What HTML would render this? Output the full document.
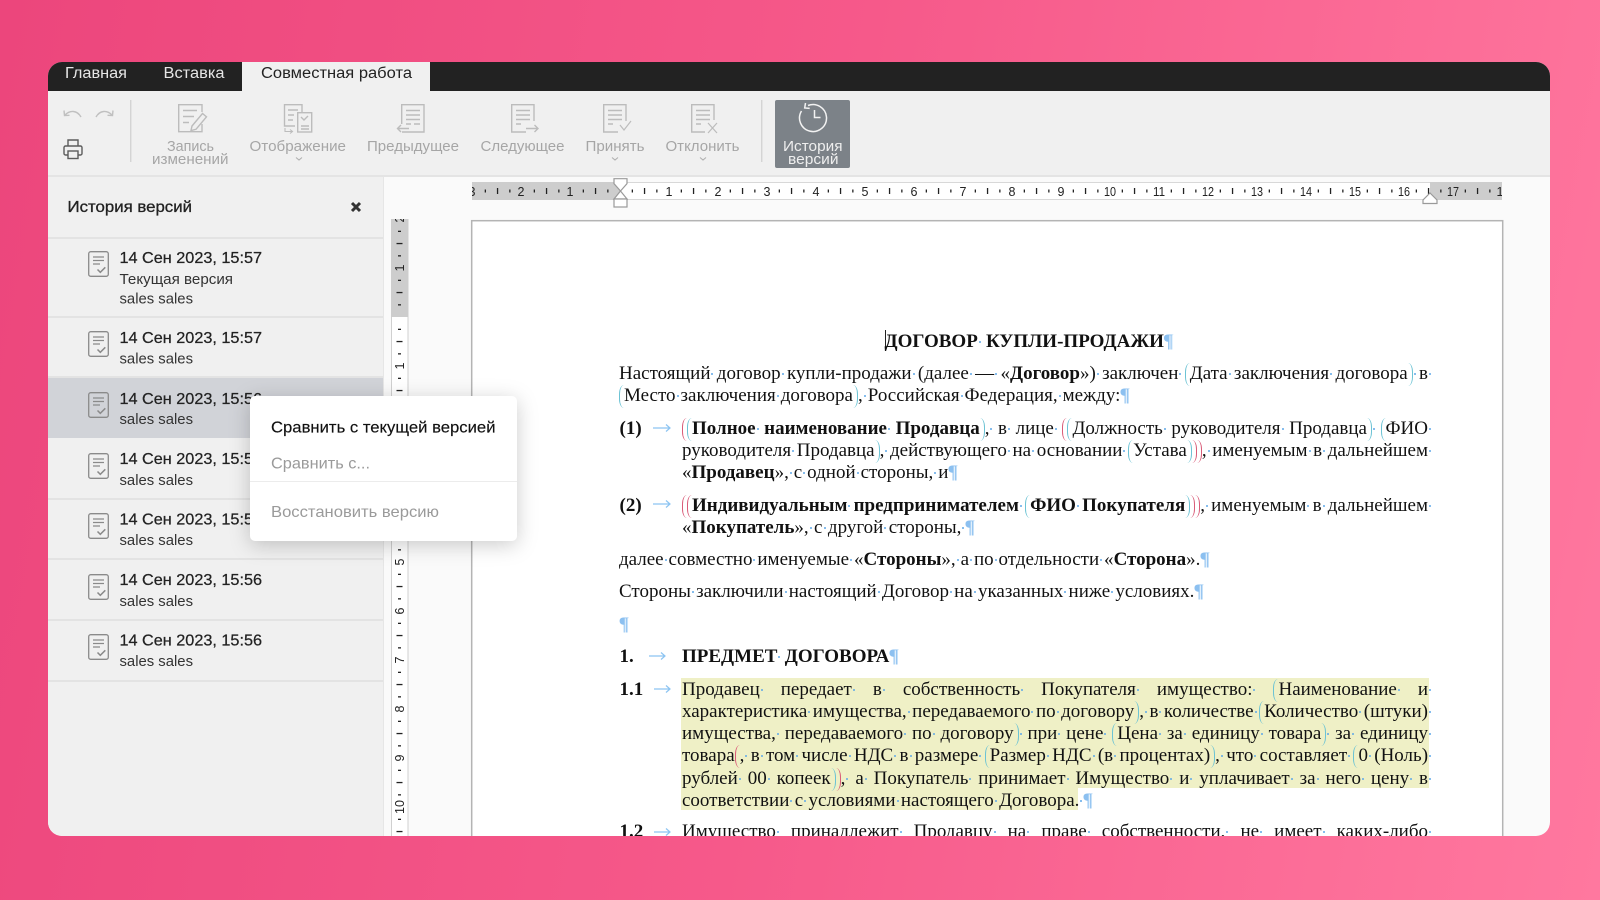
<!DOCTYPE html>
<html lang="ru"><head><meta charset="utf-8"><title>История версий</title>
<style>
html,body{margin:0;padding:0;width:1600px;height:900px;overflow:hidden;background:linear-gradient(100deg,#ec467c 0%,#f6598a 50%,#ff789f 100%)}
#w{position:absolute;left:0;top:0;width:1600px;height:900px;clip-path:inset(62px 50px 64px 48px round 14px)}
#w>svg{position:absolute;left:0;top:0}
svg text{font-family:"Liberation Sans",sans-serif}
.d{position:absolute;left:682px;width:750px;margin-top:1px;font:19px/22px "Liberation Serif",serif;color:#111;white-space:nowrap;text-align:justify;text-align-last:justify;word-spacing:-4.75px}
.m{position:absolute;left:619.5px;margin-top:1px;font:bold 19px/22px "Liberation Serif",serif;color:#111;white-space:nowrap}
u{display:inline-block;width:2px;height:2px;margin:0 1px;background:#5fa8e8;border-radius:1px;vertical-align:4px;text-decoration:none}
s{display:inline-block;width:5px;height:23px;vertical-align:-7px;text-decoration:none;box-sizing:border-box}
s.l,s.L{border-left:1.6px solid #6cc3d4;border-radius:5px 0 0 5px/9px 0 0 9px}
s.r,s.R{border-right:1.6px solid #6cc3d4;border-radius:0 5px 5px 0/0 9px 9px 0}
s.L,s.R{border-color:#d95c78}
i{font-style:normal;font-weight:normal;color:#8cc0f0;text-shadow:1px 0 #c2dff8}
</style></head><body>
<div id="w">
<svg width="1600" height="900" viewBox="0 0 1600 900" xmlns="http://www.w3.org/2000/svg">
<defs>
<symbol id="v" viewBox="0 0 21 26"><rect x=".7" y=".7" width="19.6" height="24.6" rx="2" fill="none" stroke="#8a8a8a" stroke-width="1.3"/><path d="M5 6h11M5 9.500h11M5 13h7" stroke="#8a8a8a" stroke-width="1.2" fill="none"/><path d="M9.500 18.500l2.800 2.800 5-5" stroke="#8a8a8a" stroke-width="1.5" fill="none"/></symbol>
<pattern id="hp" x="620" y="0" width="49" height="900" patternUnits="userSpaceOnUse"><rect x="11.700" y="189.500" width="1.300" height="3" fill="#222"/><rect x="23.900" y="188" width="1.300" height="6" fill="#222"/><rect x="36.200" y="189.500" width="1.300" height="3" fill="#222"/></pattern>
<pattern id="vp" x="0" y="317" width="900" height="49" patternUnits="userSpaceOnUse"><rect x="398" y="11.700" width="3" height="1.300" fill="#222"/><rect x="396.500" y="23.900" width="6" height="1.300" fill="#222"/><rect x="398" y="36.200" width="3" height="1.300" fill="#222"/></pattern>
<clipPath id="hc"><rect x="472" y="182" width="1030" height="18"/></clipPath>
<clipPath id="vc"><rect x="390" y="219" width="20" height="617"/></clipPath>
</defs>
<!-- window -->
<rect x="48" y="62" width="1502" height="774" fill="#fafafa"/>
<rect x="48" y="62" width="1502" height="29" fill="#222"/>
<rect x="242" y="62" width="188" height="29" fill="#f0f0f0"/>
<rect x="48" y="91" width="1502" height="85" fill="#f0f0f0"/>
<rect x="48" y="175" width="1502" height="2" fill="#e4e4e4"/>
<rect x="48" y="177" width="335" height="659" fill="#f0f0f0"/>
<rect x="383" y="177" width="1" height="659" fill="#e6e6e6"/>
<!-- tabs -->
<text x="65" y="78" font-size="15.5" fill="#e6e6e6" textLength="62" lengthAdjust="spacingAndGlyphs">Главная</text>
<text x="163.500" y="78" font-size="15.5" fill="#e6e6e6" textLength="61" lengthAdjust="spacingAndGlyphs">Вставка</text>
<text x="261" y="78" font-size="15.5" fill="#222" textLength="151" lengthAdjust="spacingAndGlyphs">Совместная работа</text>
<!-- toolbar left -->
<g fill="none" stroke="#c0c0c0" stroke-width="1.400">
<path d="M81 117C77 110 70 110 65 115M64 110.500l.5 5 5-.2"/>
<path d="M96 117C100 110 107 110 112 115M113 110.500l-.5 5-5-.2"/>
</g>
<g fill="none" stroke="#5c5c5c" stroke-width="1.400"><path d="M68 146v-6h10v6M68 155h-2.500a1.500 1.500 0 0 1-1.500-1.500v-6a1.500 1.500 0 0 1 1.500-1.500h15a1.500 1.500 0 0 1 1.500 1.500v6a1.500 1.500 0 0 1-1.500 1.500H78"/><rect x="68" y="151" width="10" height="7.500"/></g>
<rect x="130" y="100" width="1.400" height="62" fill="#d4d4d4"/>
<rect x="761" y="100" width="1.400" height="62" fill="#d4d4d4"/>
<!-- toolbar icons -->
<g fill="none" stroke="#bcbcbc" stroke-width="1.400">
<path d="M202 112V104.700H178.700V131.700H202V124M183 110.500h14M183 116.500h11M183 122.500h6"/>
<path d="M192 126l10.500-12.500 4 3.300L196 129.300l-5 1.200z"/>
<path d="M295 126h-10.500V104.700H302V112M288 110h10M288 115h6M288 120h5"/>
<rect x="297.700" y="112.700" width="14" height="19.300"/><path d="M301 126h8M301 129h8M301 117l3 3 4-4"/>
<path d="M285 128v3.500h7M290 129.500l2.500 2-2.500 2" stroke-width="1.100"/>
<path d="M401.700 124V104.700H424V132H402M406 110.500h14M406 115h14M406 119.500h14M406 124h5M414 124h6"/><path d="M409 128.500H397.500M401 125l-3.500 3.500 3.500 3.500"/>
<path d="M526 132H511.700V104.700H534V121M516 110.500h14M516 115h14M516 119.500h14M516 124h5"/><path d="M526 128.500H538M534.500 125l3.500 3.500-3.500 3.500"/>
<path d="M618 132H603.700V104.700H626V121M608 110.500h14M608 115h14M608 119.500h14M608 124h5"/><path d="M620 125l4 5 7-9" stroke-width="1.200"/>
<path d="M705 132H691.700V104.700H714V120M696 110.500h14M696 115h14M696 119.500h14M696 124h5"/><path d="M708 123l9 10M717 123l-9 10" stroke-width="1.200"/>
</g>
<g fill="none" stroke="#b0b0b0" stroke-width="1.100"><path d="M296 157.500l3 2.500 3-2.500M612 157.500l3 2.500 3-2.500M700 157.500l3 2.500 3-2.500"/></g>
<g font-size="15" fill="#a6a6a6">
<text x="167" y="151" textLength="47" lengthAdjust="spacingAndGlyphs">Запись</text>
<text x="152" y="164" textLength="76.500" lengthAdjust="spacingAndGlyphs">изменений</text>
<text x="249.500" y="151" textLength="96.500" lengthAdjust="spacingAndGlyphs">Отображение</text>
<text x="367" y="151" textLength="92" lengthAdjust="spacingAndGlyphs">Предыдущее</text>
<text x="480.500" y="151" textLength="84" lengthAdjust="spacingAndGlyphs">Следующее</text>
<text x="585.500" y="151" textLength="59" lengthAdjust="spacingAndGlyphs">Принять</text>
<text x="665.500" y="151" textLength="74" lengthAdjust="spacingAndGlyphs">Отклонить</text>
</g>
<rect x="775" y="100" width="75" height="68" rx="2" fill="#7c8288"/>
<g fill="none" stroke="#f2f2f2" stroke-width="1.500"><path d="M808 105.500A13.500 13.500 0 1 1 801.500 111M805.500 103l-.8 5 5 .4"/><path d="M814.500 110v7.500h6"/></g>
<g font-size="15" fill="#eeeeee">
<text x="783" y="151" textLength="59.500" lengthAdjust="spacingAndGlyphs">История</text>
<text x="788" y="164" textLength="50.500" lengthAdjust="spacingAndGlyphs">версий</text>
</g>
<!-- sidebar -->
<text x="67.500" y="212" font-size="16" fill="#222" stroke="#222" stroke-width=".3" textLength="124.500" lengthAdjust="spacingAndGlyphs">История версий</text>
<path d="M352 203l8 8M360 203l-8 8" stroke="#333" stroke-width="3" fill="none"/>
<rect x="48" y="378" width="335" height="60" fill="#d1d3d8"/>
<g fill="#e3e3e3">
<rect x="48" y="237" width="335" height="2"/><rect x="48" y="316" width="335" height="2"/><rect x="48" y="376" width="335" height="2"/><rect x="48" y="498" width="335" height="2"/><rect x="48" y="558" width="335" height="2"/><rect x="48" y="619" width="335" height="2"/><rect x="48" y="680" width="335" height="2"/>
</g>
<use href="#v" x="88" y="251" width="21" height="26"/>
<use href="#v" x="88" y="331" width="21" height="26"/>
<use href="#v" x="88" y="392" width="21" height="26"/>
<use href="#v" x="88" y="453" width="21" height="26"/>
<use href="#v" x="88" y="513" width="21" height="26"/>
<use href="#v" x="88" y="574" width="21" height="26"/>
<use href="#v" x="88" y="634" width="21" height="26"/>
<g font-size="16" fill="#222" stroke="#222" stroke-width=".25">
<text x="119.500" y="263" textLength="142.500" lengthAdjust="spacingAndGlyphs">14 Сен 2023, 15:57</text>
<text x="119.500" y="343" textLength="142.500" lengthAdjust="spacingAndGlyphs">14 Сен 2023, 15:57</text>
<text x="119.500" y="404" textLength="142.500" lengthAdjust="spacingAndGlyphs">14 Сен 2023, 15:56</text>
<text x="119.500" y="464" textLength="142.500" lengthAdjust="spacingAndGlyphs">14 Сен 2023, 15:56</text>
<text x="119.500" y="524.500" textLength="142.500" lengthAdjust="spacingAndGlyphs">14 Сен 2023, 15:56</text>
<text x="119.500" y="585" textLength="142.500" lengthAdjust="spacingAndGlyphs">14 Сен 2023, 15:56</text>
<text x="119.500" y="645.500" textLength="142.500" lengthAdjust="spacingAndGlyphs">14 Сен 2023, 15:56</text>
</g>
<g font-size="14.500" fill="#333">
<text x="119.500" y="284" textLength="113.500" lengthAdjust="spacingAndGlyphs">Текущая версия</text>
<text x="119.500" y="303.500" textLength="73.500" lengthAdjust="spacingAndGlyphs">sales sales</text>
<text x="119.500" y="363.500" textLength="73.500" lengthAdjust="spacingAndGlyphs">sales sales</text>
<text x="119.500" y="424" textLength="73.500" lengthAdjust="spacingAndGlyphs">sales sales</text>
<text x="119.500" y="485" textLength="73.500" lengthAdjust="spacingAndGlyphs">sales sales</text>
<text x="119.500" y="545" textLength="73.500" lengthAdjust="spacingAndGlyphs">sales sales</text>
<text x="119.500" y="606" textLength="73.500" lengthAdjust="spacingAndGlyphs">sales sales</text>
<text x="119.500" y="666" textLength="73.500" lengthAdjust="spacingAndGlyphs">sales sales</text>
</g>
<!-- horizontal ruler -->
<rect x="472" y="182" width="1030" height="18" fill="#fff"/>
<rect x="472" y="182" width="1030" height="1" fill="#d8d8d8"/><rect x="472" y="199" width="1030" height="1" fill="#d8d8d8"/>
<rect x="472" y="182" width="148" height="18" fill="#cdcdcd"/>
<rect x="1430" y="182" width="72" height="18" fill="#cdcdcd"/>
<rect x="472" y="182" width="1030" height="18" fill="url(#hp)"/>
<g font-size="12.500" fill="#222" text-anchor="middle" clip-path="url(#hc)">
<text x="472" y="196">3</text><text x="521" y="196">2</text><text x="570" y="196">1</text>
<text x="669" y="196">1</text><text x="718" y="196">2</text><text x="767" y="196">3</text><text x="816" y="196">4</text><text x="865" y="196">5</text><text x="914" y="196">6</text><text x="963" y="196">7</text><text x="1012" y="196">8</text><text x="1061" y="196">9</text><text x="1110" y="196" textLength="12" lengthAdjust="spacingAndGlyphs">10</text><text x="1159" y="196" textLength="12" lengthAdjust="spacingAndGlyphs">11</text><text x="1208" y="196" textLength="12" lengthAdjust="spacingAndGlyphs">12</text><text x="1257" y="196" textLength="12" lengthAdjust="spacingAndGlyphs">13</text><text x="1306" y="196" textLength="12" lengthAdjust="spacingAndGlyphs">14</text><text x="1355" y="196" textLength="12" lengthAdjust="spacingAndGlyphs">15</text><text x="1404" y="196" textLength="12" lengthAdjust="spacingAndGlyphs">16</text><text x="1453" y="196" textLength="12" lengthAdjust="spacingAndGlyphs">17</text><text x="1500" y="196">1</text>
</g>
<path d="M614 178.700h13v5l-6.500 7.300-6.500-7.300zM620.500 191l6.500 8h-13z" fill="#fff" stroke="#9a9a9a" stroke-width="1.200"/>
<rect x="614" y="199" width="13" height="8" fill="#fff" stroke="#9a9a9a" stroke-width="1.200"/>
<path d="M1430 193l7 7v3.500h-14v-3.500z" fill="#fff" stroke="#9a9a9a" stroke-width="1.200"/>
<!-- vertical ruler -->
<rect x="391" y="219" width="17.500" height="617" fill="#fff"/>
<rect x="391" y="219" width="1" height="617" fill="#d0d0d0"/><rect x="407.500" y="219" width="1" height="617" fill="#d0d0d0"/>
<rect x="391" y="219" width="17.500" height="98" fill="#cdcdcd"/>
<rect x="391" y="219" width="17.500" height="617" fill="url(#vp)"/>
<g font-size="12.500" fill="#222" text-anchor="middle" clip-path="url(#vc)">
<text transform="translate(404 219) rotate(-90)">2</text><text transform="translate(404 268) rotate(-90)">1</text>
<text transform="translate(404 366) rotate(-90)">1</text><text transform="translate(404 415) rotate(-90)">2</text><text transform="translate(404 464) rotate(-90)">3</text><text transform="translate(404 513) rotate(-90)">4</text><text transform="translate(404 562) rotate(-90)">5</text><text transform="translate(404 611) rotate(-90)">6</text><text transform="translate(404 660) rotate(-90)">7</text><text transform="translate(404 709) rotate(-90)">8</text><text transform="translate(404 758) rotate(-90)">9</text><text transform="translate(404 807) rotate(-90)">10</text>
</g>
<!-- page -->
<rect x="471.700" y="220.700" width="1031" height="640" fill="#fff" stroke="#b4b4b4" stroke-width="1.500"/>
<!-- highlight -->
<path d="M681 678H1429V788H1078V810H681z" fill="#eff0c6"/>
<!-- caret -->
<rect x="885" y="330" width="1" height="20" fill="#222"/>
<!-- arrows -->
<g fill="none" stroke="#8cc4f2" stroke-width="1.200">
<path d="M653 428h17M666 424.500l4 3.500-4 3.500"/>
<path d="M653 504h17M666 500.500l4 3.500-4 3.500"/>
<path d="M649 656h16M661 652.500l4 3.500-4 3.500"/>
<path d="M654 689h16M666 685.500l4 3.500-4 3.500"/>
<path d="M654 832h16M666 828.500l4 3.500-4 3.500"/>
</g>
<!-- context menu -->
<rect x="250" y="396" width="267" height="145" rx="5" fill="#fff" style="filter:drop-shadow(0 4px 10px rgba(0,0,0,.2))"/>
<rect x="250" y="481" width="267" height="1" fill="#ececec"/>
<text x="271" y="432.500" font-size="16" fill="#111" stroke="#111" stroke-width=".15" textLength="224.500" lengthAdjust="spacingAndGlyphs">Сравнить с текущей версией</text>
<text x="271" y="468.500" font-size="16" fill="#9a9a9a" textLength="99" lengthAdjust="spacingAndGlyphs">Сравнить с...</text>
<text x="271" y="517" font-size="16" fill="#9a9a9a" textLength="168" lengthAdjust="spacingAndGlyphs">Восстановить версию</text>
</svg>

<!-- document -->
<div class="d" style="left:884.500px;width:288px;top:329.500px;font-weight:bold">ДОГОВОР<u></u> КУПЛИ-ПРОДАЖИ<i>¶</i></div>
<div class="d" style="left:619px;width:813px;top:362px">Настоящий<u></u> договор<u></u> купли-продажи<u></u> (далее<u></u> —<u></u> «<b>Договор</b>»)<u></u> заключен<u></u> <s class="l"></s>Дата<u></u> заключения<u></u> договора<s class="r"></s><u></u> в<u></u></div>
<div class="d" style="left:619px;width:510px;top:384px"><s class="l"></s>Место<u></u> заключения<u></u> договора<s class="r"></s>,<u></u> Российская<u></u> Федерация,<u></u> между:<i>¶</i></div>

<div class="m" style="top:417px">(1)</div>
<div class="d" style="top:417px"><s class="L"></s><s class="l"></s><b>Полное<u></u> наименование<u></u> Продавца</b><s class="r"></s>,<u></u> в<u></u> лице<u></u> <s class="L"></s><s class="l"></s>Должность<u></u> руководителя<u></u> Продавца<s class="r"></s><u></u> <s class="l"></s>ФИО<u></u></div>
<div class="d" style="top:439px">руководителя<u></u> Продавца<s class="r"></s>,<u></u> действующего<u></u> на<u></u> основании<u></u> <s class="l"></s>Устава<s class="r"></s><s class="R"></s><s class="R"></s>,<u></u> именуемым<u></u> в<u></u> дальнейшем<u></u></div>
<div class="d" style="top:461px;width:275px">«<b>Продавец</b>»,<u></u> с<u></u> одной<u></u> стороны,<u></u> и<i>¶</i></div>

<div class="m" style="top:493.500px">(2)</div>
<div class="d" style="top:493.500px"><s class="L"></s><s class="L"></s><b>Индивидуальным<u></u> предпринимателем<u></u> <s class="l"></s>ФИО<u></u> Покупателя</b><s class="r"></s><s class="R"></s><s class="R"></s>,<u></u> именуемым<u></u> в<u></u> дальнейшем<u></u></div>
<div class="d" style="top:515.500px;width:292px">«<b>Покупатель</b>»,<u></u> с<u></u> другой<u></u> стороны,<u></u><i>¶</i></div>

<div class="d" style="left:619px;width:590px;top:548px">далее<u></u> совместно<u></u> именуемые<u></u> «<b>Стороны</b>»,<u></u> а<u></u> по<u></u> отдельности<u></u> «<b>Сторона</b>».<i>¶</i></div>
<div class="d" style="left:619px;width:584px;top:580px">Стороны<u></u> заключили<u></u> настоящий<u></u> Договор<u></u> на<u></u> указанных<u></u> ниже<u></u> условиях.<i>¶</i></div>
<div class="m" style="top:613px;font-weight:normal"><i>¶</i></div>

<div class="m" style="top:645px">1.</div>
<div class="d" style="top:645px;width:216px;font-weight:bold">ПРЕДМЕТ<u></u> ДОГОВОРА<i>¶</i></div>

<div class="m" style="top:677.500px">1.1</div>
<div class="d" style="top:677.500px">Продавец<u></u> передает<u></u> в<u></u> собственность<u></u> Покупателя<u></u> имущество:<u></u> <s class="l"></s>Наименование<u></u> и<u></u></div>
<div class="d" style="top:700px">характеристика<u></u> имущества,<u></u> передаваемого<u></u> по<u></u> договору<s class="r"></s>,<u></u> в<u></u> количестве<u></u> <s class="l"></s>Количество<u></u> (штуки)<u></u></div>
<div class="d" style="top:722px">имущества,<u></u> передаваемого<u></u> по<u></u> договору<s class="r"></s><u></u> при<u></u> цене<u></u> <s class="l"></s>Цена<u></u> за<u></u> единицу<u></u> товара<s class="r"></s><u></u> за<u></u> единицу<u></u></div>
<div class="d" style="top:744px">товара<s class="L"></s>,<u></u> в<u></u> том<u></u> числе<u></u> НДС<u></u> в<u></u> размере<u></u> <s class="l"></s>Размер<u></u> НДС<u></u> (в<u></u> процентах)<s class="r"></s>,<u></u> что<u></u> составляет<u></u> <s class="l"></s>0<u></u> (Ноль)<u></u></div>
<div class="d" style="top:766.500px">рублей<u></u> 00<u></u> копеек<s class="r"></s><s class="R"></s>,<u></u> а<u></u> Покупатель<u></u> принимает<u></u> Имущество<u></u> и<u></u> уплачивает<u></u> за<u></u> него<u></u> цену<u></u> в<u></u></div>
<div class="d" style="top:788.500px;width:410px">соответствии<u></u> с<u></u> условиями<u></u> настоящего<u></u> Договора.<u></u><i>¶</i></div>

<div class="m" style="top:820px">1.2</div>
<div class="d" style="top:820px">Имущество<u></u> принадлежит<u></u> Продавцу<u></u> на<u></u> праве<u></u> собственности,<u></u> не<u></u> имеет<u></u> каких-либо<u></u></div>
</div>
</body></html>
